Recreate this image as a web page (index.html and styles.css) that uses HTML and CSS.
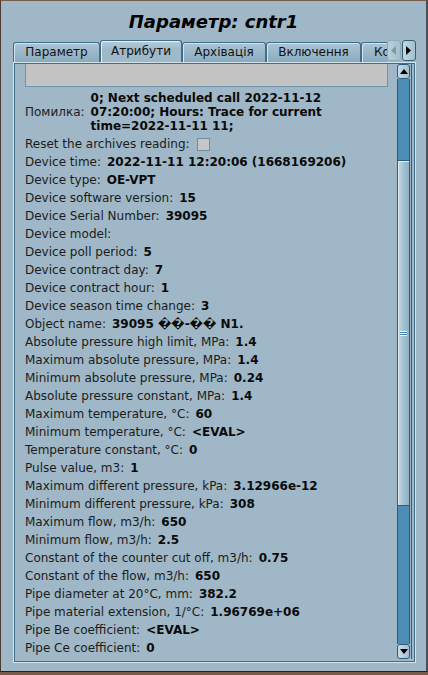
FILE: index.html
```html
<!DOCTYPE html>
<html>
<head>
<meta charset="utf-8">
<link rel="stylesheet" href="styles.css">
</head>
<body>
<div class="window">
  <h1 class="title">Параметр: cntr1</h1>
  <div class="tabbar">
    <div class="tabstrip">
      <div class="tab w1">Параметр</div>
      <div class="tab active w2">Атрибути</div>
      <div class="tab w3">Архівація</div>
      <div class="tab w4">Включення</div>
      <div class="tab w5">Конфігурація</div>
    </div>
    <div class="tabarrows">
      <span class="tabarrow disabled"><svg width="6" height="9" viewBox="0 0 6 9"><path d="M5 0 L0 4.5 L5 9 Z" fill="#7f98a6"/></svg></span>
      <span class="tabarrow"><svg width="6" height="9" viewBox="0 0 6 9"><path d="M0 0 L5 4.5 L0 9 Z" fill="#000"/></svg></span>
    </div>
  </div>
  <div class="panel">
    <div class="scrollview">
      <div class="content">
        <div class="field"></div>
        <div class="row err"><span class="label">Помилка:</span><span class="value">0; Next scheduled call 2022-11-12<br>07:20:00; Hours: Trace for current<br>time=2022-11-11 11;</span></div>
        <div class="row"><span class="label">Reset the archives reading:</span><span class="check"></span></div>
        <div class="row"><span class="label">Device time:</span><span class="value">2022-11-11 12:20:06 (1668169206)</span></div>
        <div class="row"><span class="label">Device type:</span><span class="value">OE-VPT</span></div>
        <div class="row"><span class="label">Device software version:</span><span class="value">15</span></div>
        <div class="row"><span class="label">Device Serial Number:</span><span class="value">39095</span></div>
        <div class="row"><span class="label">Device model:</span><span class="value"></span></div>
        <div class="row"><span class="label">Device poll period:</span><span class="value">5</span></div>
        <div class="row"><span class="label">Device contract day:</span><span class="value">7</span></div>
        <div class="row"><span class="label">Device contract hour:</span><span class="value">1</span></div>
        <div class="row"><span class="label">Device season time change:</span><span class="value">3</span></div>
        <div class="row"><span class="label">Object name:</span><span class="value">39095 ��-�� N1.</span></div>
        <div class="row"><span class="label">Absolute pressure high limit, MPa:</span><span class="value">1.4</span></div>
        <div class="row"><span class="label">Maximum absolute pressure, MPa:</span><span class="value">1.4</span></div>
        <div class="row"><span class="label">Minimum absolute pressure, MPa:</span><span class="value">0.24</span></div>
        <div class="row"><span class="label">Absolute pressure constant, MPa:</span><span class="value">1.4</span></div>
        <div class="row"><span class="label">Maximum temperature, °C:</span><span class="value">60</span></div>
        <div class="row"><span class="label">Minimum temperature, °C:</span><span class="value">&lt;EVAL&gt;</span></div>
        <div class="row"><span class="label">Temperature constant, °C:</span><span class="value">0</span></div>
        <div class="row"><span class="label">Pulse value, m3:</span><span class="value">1</span></div>
        <div class="row"><span class="label">Maximum different pressure, kPa:</span><span class="value">3.12966e-12</span></div>
        <div class="row"><span class="label">Minimum different pressure, kPa:</span><span class="value">308</span></div>
        <div class="row"><span class="label">Maximum flow, m3/h:</span><span class="value">650</span></div>
        <div class="row"><span class="label">Minimum flow, m3/h:</span><span class="value">2.5</span></div>
        <div class="row"><span class="label">Constant of the counter cut off, m3/h:</span><span class="value">0.75</span></div>
        <div class="row"><span class="label">Constant of the flow, m3/h:</span><span class="value">650</span></div>
        <div class="row"><span class="label">Pipe diameter at 20°C, mm:</span><span class="value">382.2</span></div>
        <div class="row"><span class="label">Pipe material extension, 1/°C:</span><span class="value">1.96769e+06</span></div>
        <div class="row"><span class="label">Pipe Be coefficient:</span><span class="value">&lt;EVAL&gt;</span></div>
        <div class="row"><span class="label">Pipe Ce coefficient:</span><span class="value">0</span></div>
      </div>
      <div class="vscroll">
        <div class="sbtn"><svg width="8" height="5" viewBox="0 0 8 5"><path d="M4 0 L8 5 L0 5 Z" fill="#000"/></svg></div>
        <div class="track top"></div>
        <div class="thumb"><span class="grip"></span></div>
        <div class="track bottom"></div>
        <div class="sbtn"><svg width="8" height="5" viewBox="0 0 8 5"><path d="M0 0 L8 0 L4 5 Z" fill="#000"/></svg></div>
      </div>
    </div>
  </div>
</div>
</body>
</html>
```
FILE: styles.css
```css
html, body {
  margin: 0;
  padding: 0;
  background: #7a5b49;
}
body {
  width: 428px;
  height: 675px;
  overflow: hidden;
  font-family: "DejaVu Sans", sans-serif;
  font-size: 12px;
  color: #141414;
}
.window {
  box-sizing: border-box;
  width: 428px;
  height: 672px;
  background: #9fb7c6;
  border-top: 1px solid #7a5b49;
  border-left: 1px solid #4b3a30;
  border-right: 2px solid #4a4f55;
  border-bottom: 1px solid #202020;
  overflow: hidden;
}
.title {
  margin: 0;
  height: 39px;
  line-height: 42px;
  text-align: center;
  font-size: 18px;
  font-weight: bold;
  font-style: italic;
  color: #000;
}
.tabbar {
  display: flex;
  align-items: flex-end;
  height: 22px;
  margin-left: 12px;
  width: 403px;
}
.tabstrip {
  display: flex;
  align-items: flex-end;
  width: 374px;
  height: 22px;
  overflow: hidden;
}
.tab {
  box-sizing: border-box;
  flex: none;
  height: 20px;
  line-height: 19px;
  text-align: center;
  white-space: nowrap;
  color: #111;
  background: linear-gradient(#abc4d2, #8aabbf);
  border: 1px solid #3f6d8a;
  border-bottom: none;
  border-radius: 3px 3px 0 0;
  box-shadow: inset 1px 1px 0 #d4e4ee;
}
.tab.active {
  height: 22px;
  line-height: 20px;
  background: linear-gradient(#b4cddb, #a0b9c8 40%);
  box-shadow: inset 1px 1px 0 #e4f0f6;
}
.w1 { width: 87px; }
.w2 { width: 82px; }
.w3 { width: 84px; }
.w4 { width: 95px; }
.w5 { width: 100px; text-align: left; padding-left: 12px; }
.tabarrows {
  display: flex;
  gap: 1px;
  height: 21px;
  margin-bottom: 1px;
}
.tabarrow {
  box-sizing: border-box;
  width: 14px;
  height: 21px;
  display: flex;
  align-items: center;
  justify-content: center;
  background: linear-gradient(90deg, #c2d8e4, #a3bfcf);
  border: 1px solid #355f7a;
  border-radius: 3px;
}
.tabarrow.disabled {
  border-color: #8eabbc;
  background: linear-gradient(90deg, #b9cfdb, #a5bfcd);
}
.panel {
  box-sizing: border-box;
  margin-left: 12px;
  width: 403px;
  height: 601px;
  border: 1px solid #d2e3ec;
  box-shadow: inset 1px 1px 0 #3f6d8a, inset -1px -1px 0 #3f6d8a;
  padding: 1px 3px 2px 1px;
}
.scrollview {
  display: flex;
  height: 100%;
  overflow: hidden;
}
.content {
  flex: 1;
  padding-left: 10px;
  overflow: hidden;
}
.field {
  box-sizing: border-box;
  width: 363px;
  height: 23px;
  background: #c3c3c3;
  border: 1px solid #6f95ab;
  border-top: none;
}
.row {
  display: flex;
  align-items: center;
  gap: 6px;
  height: 18px;
  white-space: nowrap;
}
.row.err {
  height: 42px;
  margin-top: 4px;
  margin-bottom: 2px;
  line-height: 14px;
}
.label {
  color: #1c1c1c;
}
.value {
  font-weight: bold;
  color: #0a0a0a;
}
.check {
  box-sizing: border-box;
  width: 13px;
  height: 13px;
  background: #c6c6c6;
  border: 1px solid #6d8ea3;
  margin-left: 1px;
}
.vscroll {
  box-sizing: border-box;
  flex: none;
  width: 16px;
  height: 595px;
  margin-top: 0;
  display: flex;
  flex-direction: column;
  padding: 0 1px;
  border-right: 1px solid #2e5e7e;
}
.sbtn {
  box-sizing: border-box;
  height: 15px;
  display: flex;
  align-items: center;
  justify-content: center;
  background: linear-gradient(90deg, #c7dce7, #a2bfd0);
  border: 1px solid #2e5e7e;
  border-radius: 3px;
}
.track {
  background: #4d8cb4;
  border-left: 1px solid #2e5e7e;
  border-right: 1px solid #2e5e7e;
}
.track.top { height: 81px; }
.track.bottom { flex: 1; }
.thumb {
  box-sizing: border-box;
  height: 346px;
  display: flex;
  align-items: center;
  justify-content: center;
  background: linear-gradient(90deg, #c3d9e5, #9fbdcf 60%, #8fb1c5);
  border: 1px solid #2e5e7e;
  box-shadow: inset 1px 1px 0 #e2eef4;
}
.grip {
  width: 7px;
  height: 5px;
  background: repeating-linear-gradient(#ffffff 0 1px, #3d7ea6 1px 2px);
}
```
